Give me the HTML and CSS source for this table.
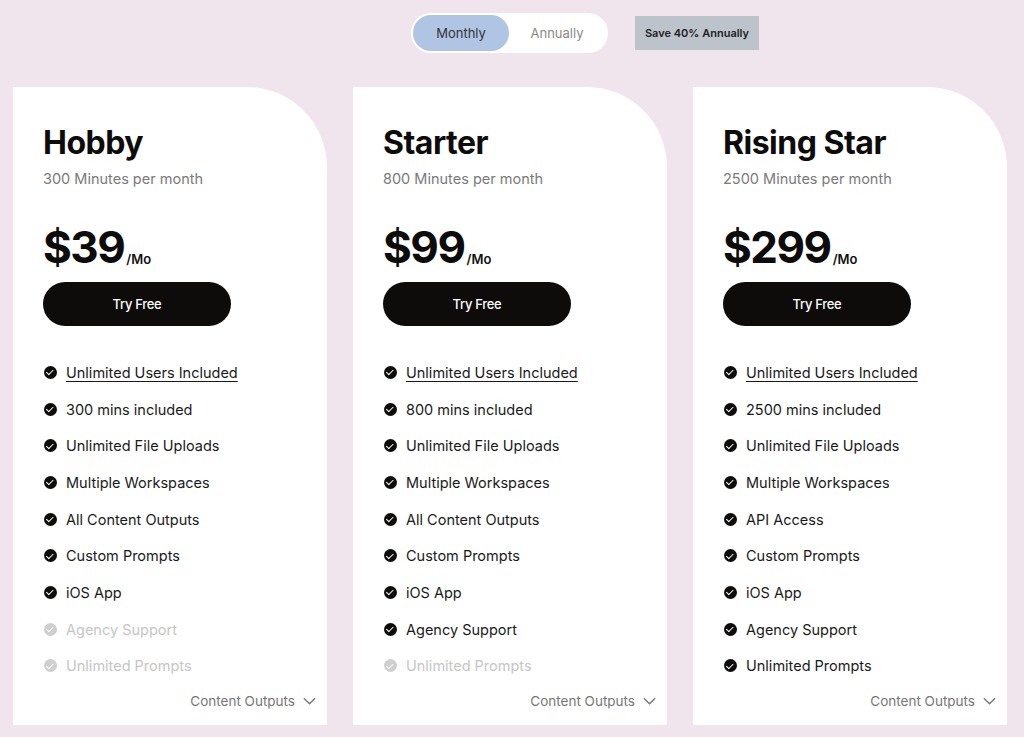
FILE: index.html
```html
<!DOCTYPE html>
<html>
<head>
<meta charset="utf-8">
<link rel="stylesheet" href="styles.css">
</head>
<body>
<div class="page">
  <div class="topbar">
    <div class="toggle">
      <span class="opt active">Monthly</span>
      <span class="opt">Annually</span>
    </div>
    <span class="save">Save 40% Annually</span>
  </div>
  <div class="cards">
    <div class="card">
      <h2 class="title">Hobby</h2>
      <p class="sub">300 Minutes per month</p>
      <div class="price"><span class="amt">$39</span><span class="per">/Mo</span></div>
      <button class="btn">Try Free</button>
      <ul class="feats">
        <li><span class="ck"></span><span class="u">Unlimited Users Included</span></li>
        <li><span class="ck"></span>300 mins included</li>
        <li><span class="ck"></span>Unlimited File Uploads</li>
        <li><span class="ck"></span>Multiple Workspaces</li>
        <li><span class="ck"></span>All Content Outputs</li>
        <li><span class="ck"></span>Custom Prompts</li>
        <li><span class="ck"></span>iOS App</li>
        <li class="off"><span class="ck"></span>Agency Support</li>
        <li class="off"><span class="ck"></span>Unlimited Prompts</li>
      </ul>
      <div class="more">Content Outputs <svg class="chev" viewBox="0 0 14 8"><path d="M1 1l6 6 6-6" fill="none" stroke="#777" stroke-width="1.5"/></svg></div>
    </div>
    <div class="card">
      <h2 class="title">Starter</h2>
      <p class="sub">800 Minutes per month</p>
      <div class="price"><span class="amt">$99</span><span class="per">/Mo</span></div>
      <button class="btn">Try Free</button>
      <ul class="feats">
        <li><span class="ck"></span><span class="u">Unlimited Users Included</span></li>
        <li><span class="ck"></span>800 mins included</li>
        <li><span class="ck"></span>Unlimited File Uploads</li>
        <li><span class="ck"></span>Multiple Workspaces</li>
        <li><span class="ck"></span>All Content Outputs</li>
        <li><span class="ck"></span>Custom Prompts</li>
        <li><span class="ck"></span>iOS App</li>
        <li><span class="ck"></span>Agency Support</li>
        <li class="off"><span class="ck"></span>Unlimited Prompts</li>
      </ul>
      <div class="more">Content Outputs <svg class="chev" viewBox="0 0 14 8"><path d="M1 1l6 6 6-6" fill="none" stroke="#777" stroke-width="1.5"/></svg></div>
    </div>
    <div class="card">
      <h2 class="title">Rising Star</h2>
      <p class="sub">2500 Minutes per month</p>
      <div class="price"><span class="amt">$299</span><span class="per">/Mo</span></div>
      <button class="btn">Try Free</button>
      <ul class="feats">
        <li><span class="ck"></span><span class="u">Unlimited Users Included</span></li>
        <li><span class="ck"></span>2500 mins included</li>
        <li><span class="ck"></span>Unlimited File Uploads</li>
        <li><span class="ck"></span>Multiple Workspaces</li>
        <li><span class="ck"></span>API Access</li>
        <li><span class="ck"></span>Custom Prompts</li>
        <li><span class="ck"></span>iOS App</li>
        <li><span class="ck"></span>Agency Support</li>
        <li><span class="ck"></span>Unlimited Prompts</li>
      </ul>
      <div class="more">Content Outputs <svg class="chev" viewBox="0 0 14 8"><path d="M1 1l6 6 6-6" fill="none" stroke="#777" stroke-width="1.5"/></svg></div>
    </div>
  </div>
</div>
</body>
</html>
```
FILE: styles.css
```css
* { box-sizing: border-box; }
html, body { margin: 0; padding: 0; }
body {
  background: #f0e5ec;
  font-family: "Inter", "Liberation Sans", sans-serif;
  color: #111;
  height: 737px;
  overflow: hidden;
}
.page { padding: 13px 0 0 13px; }
.topbar {
  display: flex;
  align-items: center;
  height: 40px;
  padding-left: 398px;
}
.toggle {
  display: flex;
  background: #fff;
  border-radius: 20px;
  padding: 2px;
  width: 197px;
  height: 40px;
}
.opt {
  width: 96px;
  height: 36px;
  border-radius: 18px;
  display: flex;
  align-items: center;
  justify-content: center;
  font-size: 13px;
  color: #8a8a8a;
}
.opt.active { background: #b0c4e4; color: #333; }
.save {
  margin-left: 27px;
  background: #bcc3cb;
  height: 34px;
  width: 124px;
  display: flex;
  align-items: center;
  justify-content: center;
  font-size: 11px;
  font-weight: 600;
  color: #222;
}
.cards {
  display: flex;
  gap: 26px;
  margin-top: 34px;
}
.card {
  width: 314px;
  height: 638px;
  background: #fff;
  border-top-right-radius: 80px;
  padding: 36px 0 0 30px;
  position: relative;
  display: flex;
  flex-direction: column;
}
.title {
  margin: 0;
  font-size: 32px;
  font-weight: 700;
  letter-spacing: -0.5px;
  line-height: 40px;
  color: #0e0c0a;
}
.sub {
  margin: 6px 0 0;
  font-size: 14.5px;
  color: #7a7a7a;
  line-height: 20px;
}
.price {
  margin-top: 34px;
  display: flex;
  align-items: flex-end;
  height: 48px;
}
.amt {
  font-size: 44px;
  font-weight: 700;
  letter-spacing: -1.5px;
  line-height: 48px;
  color: #0e0c0a;
}
.per {
  font-size: 13px;
  font-weight: 600;
  margin-left: 2px;
  margin-bottom: 4px;
}
.btn {
  margin-top: 11px;
  width: 188px;
  height: 44px;
  border: 0;
  border-radius: 22px;
  background: #0e0c0a;
  color: #fff;
  font-family: inherit;
  font-size: 13px;
  font-weight: 500;
  letter-spacing: -0.3px;
}
.feats {
  list-style: none;
  margin: 28px 0 0;
  padding: 0;
}
.feats li {
  display: flex;
  align-items: center;
  height: 36.7px;
  font-size: 14.5px;
  color: #1a1a1a;
}
.feats li.off { color: #c6c6c6; }
.u { text-decoration: underline; text-underline-offset: 3px; text-decoration-thickness: 1px; }
.ck {
  width: 13px;
  height: 13px;
  border-radius: 50%;
  background: #0e0c0a;
  margin: 0 9px 0 1px;
  position: relative;
  flex: none;
}
.off .ck { background: #cfcfcf; }
.ck::after {
  content: "";
  position: absolute;
  left: 4px;
  top: 2.5px;
  width: 3px;
  height: 5.5px;
  border: solid #fff;
  border-width: 0 1.6px 1.6px 0;
  transform: rotate(45deg);
}
.more {
  position: absolute;
  right: 11px;
  bottom: 16px;
  display: flex;
  align-items: center;
  gap: 8px;
  font-size: 13.5px;
  color: #777;
}
.chev { width: 13px; height: 8px; }
```
